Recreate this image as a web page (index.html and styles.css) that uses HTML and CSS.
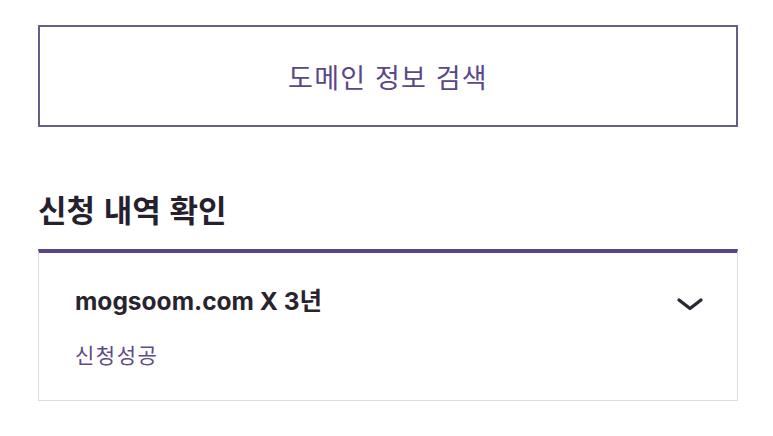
FILE: index.html
```html
<!DOCTYPE html>
<html lang="ko">
<head>
<meta charset="utf-8">
<link rel="stylesheet" href="styles.css">
</head>
<body>
<main class="page">
  <button class="search-btn" type="button">도메인 정보 검색</button>
  <h2 class="section-title">신청 내역 확인</h2>
  <section class="history">
    <div class="item">
      <div class="item-text">
        <div class="item-name">mogsoom.com X 3년</div>
        <div class="item-status">신청성공</div>
      </div>
      <svg class="chevron" width="28" height="14" viewBox="0 0 28 14" aria-hidden="true">
        <path d="M3 3 L14 11.5 L25 3" fill="none" stroke="#2b2833" stroke-width="3.4" stroke-linecap="round" stroke-linejoin="round"/>
      </svg>
    </div>
  </section>
</main>
</body>
</html>
```

FILE: styles.css
```css
* { box-sizing: border-box; }
html, body {
  margin: 0;
  padding: 0;
  background: #ffffff;
}
body {
  font-family: "Noto Sans CJK KR", "Noto Sans", sans-serif;
}
.page {
  width: 700px;
  margin-left: 38px;
  padding-top: 25px;
}
.search-btn {
  display: block;
  width: 100%;
  height: 102px;
  border: 2px solid #6a5d85;
  background: #fff;
  color: #5a4886;
  font-family: "Noto Sans CJK KR", sans-serif;
  font-size: 27px;
  letter-spacing: 1.2px;
  font-weight: 400;
  padding: 0;
  margin: 0;
}
.section-title {
  margin: 61px 0 0 0;
  font-size: 31px;
  line-height: 42px;
  font-weight: 700;
  color: #261f30;
}
.history {
  margin-top: 19px;
  border-top: 4px solid #5b4485;
  border-left: 1px solid #dddbe0;
  border-right: 1px solid #dddbe0;
  border-bottom: 1px solid #dddbe0;
}
.item {
  display: flex;
  align-items: flex-start;
  justify-content: space-between;
  padding: 33px 33px 32px 36px;
}
.item-name {
  font-family: "Inter", "Noto Sans CJK KR", sans-serif;
  font-size: 24.5px;
  font-weight: 700;
  line-height: 30px;
  color: #29232f;
}
.item-status {
  margin-top: 24px;
  font-size: 21px;
  letter-spacing: 1.5px;
  line-height: 28px;
  color: #5d4c88;
}
.chevron {
  margin-top: 11px;
}
```
